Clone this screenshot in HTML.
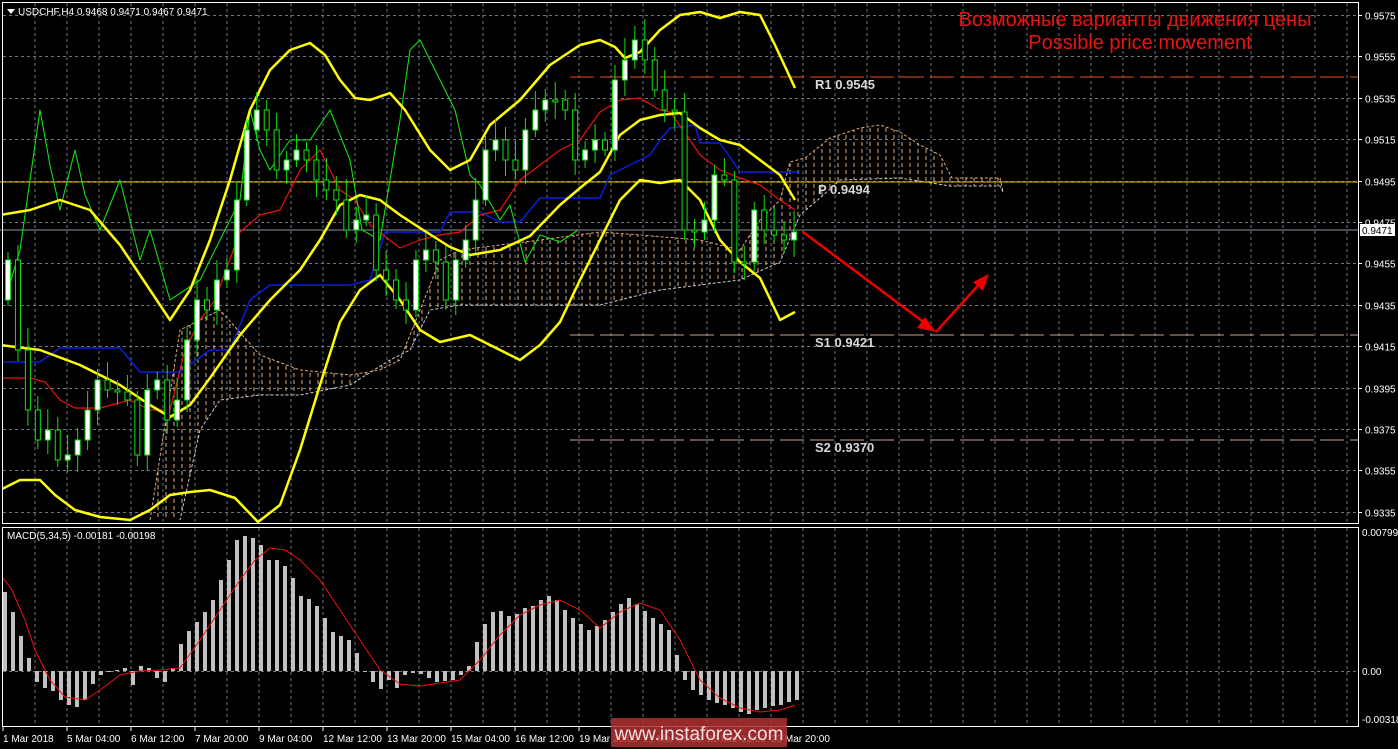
<!DOCTYPE html>
<html><head><meta charset="utf-8"><style>
html,body{margin:0;padding:0;background:#000;width:1398px;height:749px;overflow:hidden}
svg{display:block}
text{font-family:"Liberation Sans",sans-serif}
</style></head><body>
<svg id="s" width="1398" height="749" xmlns="http://www.w3.org/2000/svg">
<defs>
<clipPath id="main"><rect x="3" y="3" width="1355" height="520"/></clipPath>
<clipPath id="mc"><rect x="3" y="528" width="1355" height="198"/></clipPath>
</defs>
<rect width="1398" height="749" fill="#000"/>
<g id="grid"></g>
<g id="cloud" clip-path="url(#main)"></g>
<line x1="570" y1="77" x2="1358" y2="77" stroke="#e0501e" stroke-width="1" stroke-dasharray="24,6"/>
<line x1="0" y1="182" x2="1358" y2="182" stroke="#f0c000" stroke-width="1"/>
<line x1="570" y1="335" x2="1358" y2="335" stroke="#c8a090" stroke-width="1" stroke-dasharray="24,6"/>
<line x1="570" y1="440" x2="1358" y2="440" stroke="#c8a090" stroke-width="1" stroke-dasharray="24,6"/>
<line x1="0" y1="230" x2="1358" y2="230" stroke="#8a93a0" stroke-width="1"/>
<g font-family="Liberation Mono, monospace" font-size="13" font-weight="bold" fill="#d8d8d8">
<text x="815" y="89">R1 0.9545</text>
<text x="818" y="194">P 0.9494</text>
<text x="815" y="347">S1 0.9421</text>
<text x="815" y="452">S2 0.9370</text>
</g>
<g id="ind" clip-path="url(#main)" fill="none"></g>
<g id="cand" clip-path="url(#main)"></g>
<g stroke="#ee0000" stroke-width="2.5" fill="#ee0000">
<line x1="803" y1="232" x2="930" y2="327"/>
<polygon points="936,332 917,328 925,317" stroke="none"/>
<line x1="936" y1="332" x2="983" y2="280"/>
<polygon points="989,274 983,291 973,282" stroke="none"/>
</g>
<rect x="2.5" y="2.5" width="1356" height="521" fill="none" stroke="#fff" stroke-width="1"/>
<rect x="2.5" y="527.5" width="1356" height="199" fill="none" stroke="#fff" stroke-width="1"/>
<g id="macd" clip-path="url(#mc)"></g>
<g id="axis" font-size="10" fill="#fff"></g>
<polygon points="7,9 15,9 11,14" fill="#fff"/>
<text x="18" y="15" font-size="10" fill="#fff">USDCHF,H4  0.9468 0.9471 0.9467 0.9471</text>
<text x="7" y="539" font-size="10" fill="#fff">MACD(5,34,5) -0.00181 -0.00198</text>
<rect x="1360" y="224" width="35" height="12" fill="#fff"/>
<text x="1362" y="234" font-size="10" fill="#000">0.9471</text>
<g fill="#ee1111" font-size="20" text-anchor="middle">
<text x="1135" y="26">Возможные варианты движения цены</text>
<text x="1140" y="49">Possible price movement</text>
</g>
<rect x="611" y="718" width="176" height="29" fill="#b03030" opacity="0.85"/>
<text x="699" y="740" font-size="19" fill="#f0e0e0" text-anchor="middle">www.instaforex.com</text>
</svg>
<script>
(function(){
var NS="http://www.w3.org/2000/svg";
function el(p,t,a){var e=document.createElementNS(NS,t);for(var k in a)e.setAttribute(k,a[k]);document.getElementById(p).appendChild(e);return e;}
for(var x=35;x<1358;x+=32){el("grid","line",{x1:x,y1:3,x2:x,y2:523,stroke:"#6a7585","stroke-dasharray":"3,3"});el("grid","line",{x1:x,y1:528,x2:x,y2:726,stroke:"#6a7585","stroke-dasharray":"3,3"});}
var prices=["0.9575","0.9555","0.9535","0.9515","0.9495","0.9475","0.9455","0.9435","0.9415","0.9395","0.9375","0.9355","0.9335"];
for(var i=0;i<13;i++){var y=Math.round(15+i*41.4)+0.5;el("grid","line",{x1:3,y1:y,x2:1358,y2:y,stroke:"#6a7585","stroke-dasharray":"3,3"});
 el("axis","line",{x1:1358,y1:y,x2:1362,y2:y,stroke:"#fff"});
 var t=el("axis","text",{x:1365,y:y+4});t.textContent=prices[i];}
el("grid","line",{x1:3,y1:671.5,x2:1358,y2:671.5,stroke:"#6a7585","stroke-dasharray":"3,3"});
[["0.00799",536],["0.00",675],["-0.00318",723]].forEach(function(a){var t=el("axis","text",{x:1362,y:a[1]});t.textContent=a[0];});
var tl=["1 Mar 2018","5 Mar 04:00","6 Mar 12:00","7 Mar 20:00","9 Mar 04:00","12 Mar 12:00","13 Mar 20:00","15 Mar 04:00","16 Mar 12:00","19 Mar 20:00","21 Mar 04:00","22 Mar 12:00","23 Mar 20:00"];
for(var i=0;i<tl.length;i++){var x=3+i*64;el("axis","line",{x1:x,y1:727,x2:x,y2:731,stroke:"#fff"});var t=el("axis","text",{x:x,y:742});t.textContent=tl[i];}
var up=[[150,520],[180,330],[220,310],[260,355],[300,370],[350,375],[380,370],[400,360],[420,310],[440,260],[460,250],[500,245],[540,240],[600,232],[640,235],[700,240],[740,250],[760,220],[780,200],[790,162],[805,158],[830,138],[860,128],[880,125],[900,132],[920,145],[940,155],[952,178],[1000,178],[1003,192]];
var lo=[[1003,192],[1000,186],[950,186],[900,178],[840,180],[820,198],[800,215],[780,262],[740,280],[700,285],[660,290],[600,305],[520,305],[460,305],[430,310],[410,350],[390,360],[350,385],[300,395],[260,395],[220,400],[200,430],[180,520]];
var poly=up.concat(lo).map(function(p){return p.join(",")}).join(" ");
var cp=el("cloud","clipPath",{id:"cc"});var pp=document.createElementNS(NS,"polygon");pp.setAttribute("points",poly);cp.appendChild(pp);
var g=el("cloud","g",{"clip-path":"url(#cc)"});
for(var x=150;x<1005;x+=8){var l=document.createElementNS(NS,"line");l.setAttribute("x1",x);l.setAttribute("x2",x);l.setAttribute("y1",100);l.setAttribute("y2",523);l.setAttribute("stroke","#e0a878");l.setAttribute("stroke-dasharray","4,3");l.setAttribute("stroke-width","1");g.appendChild(l);}
el("cloud","polyline",{points:up.map(function(p){return p.join(",")}).join(" "),fill:"none",stroke:"#e0a878","stroke-dasharray":"3,2"});
el("cloud","polyline",{points:lo.map(function(p){return p.join(",")}).join(" "),fill:"none",stroke:"#d0c8d8","stroke-dasharray":"3,2"});
function pl(pts,c,w){el("ind","polyline",{points:pts,stroke:c,"stroke-width":w,"stroke-linejoin":"round"});}
pl("0,362 40,362 60,348 120,348 140,372 180,372 210,350 230,350 250,300 270,285 350,285 370,280 385,232 440,232 450,212 480,212 500,222 520,222 540,198 600,198 610,175 630,165 650,155 660,140 670,128 695,125 700,143 720,143 740,172 760,172 800,172","#0a1ee0",1.5);
pl("0,378 30,378 45,382 60,400 75,408 100,408 130,400 150,410 170,410 185,350 200,320 215,300 240,232 260,215 280,210 300,170 320,150 340,190 355,200 370,225 400,248 420,240 440,235 460,232 480,215 500,210 520,180 540,165 560,150 580,140 600,112 620,100 640,98 660,110 670,112 690,140 700,155 720,170 740,178 760,185 780,200 795,210","#ee1010",1.2);
pl("5,300 20,250 40,110 50,165 60,210 75,150 85,195 100,230 120,180 140,260 150,230 170,300 200,280 220,240 240,200 250,110 260,150 270,170 290,140 310,140 330,110 350,160 362,230 380,240 400,120 410,50 420,40 430,60 440,80 455,110 470,175 480,185 500,220 510,205 525,262 540,235 560,242 578,230","#10e010",1.1);
var bw=2.5,bc="#ffff00";
pl("0,215 30,210 60,200 90,210 120,245 150,290 170,320 190,290 210,240 230,180 250,110 270,70 290,50 310,43 325,55 340,80 355,98 370,100 390,93 405,110 430,150 450,170 470,160 490,125 520,100 550,65 580,45 600,40 615,47 625,58 640,52 660,30 680,15 700,12 720,18 740,12 760,15 775,45 795,88",bc,bw);
pl("0,345 40,350 80,365 120,385 150,405 170,417 190,405 210,378 240,335 270,300 300,270 320,240 340,205 360,195 380,200 400,215 420,228 450,247 470,255 500,250 530,236 560,205 580,188 600,172 620,135 640,120 660,115 680,113 700,128 720,140 740,145 760,160 780,175 795,200",bc,bw);
pl("0,490 20,480 40,480 55,495 75,510 100,517 130,520 150,510 170,495 190,492 210,490 235,498 258,522 280,505 300,450 320,385 340,322 360,290 380,275 400,300 420,330 440,342 470,335 500,350 520,360 540,345 560,322 580,280 600,240 620,200 640,180 660,183 680,180 700,200 720,240 740,262 760,278 780,320 795,312",bc,bw);
var cl=[260,350,410,440,430,460,455,440,410,380,390,392,400,455,390,380,420,400,340,300,310,280,270,200,130,110,130,170,160,150,160,180,190,200,230,220,215,270,280,300,310,260,250,262,300,260,240,200,150,140,160,170,130,110,100,100,110,160,150,140,150,80,60,40,60,90,110,112,230,232,220,175,180,262,262,210,230,235,240,232];
var prev=300;
for(var i=0;i<cl.length;i++){var x=5+i*9.95;var c=cl[i],o=prev;var tp=Math.min(o,c),bt=Math.max(o,c);if(bt-tp<2)bt=tp+2;
 el("cand","line",{x1:x+3,y1:tp-8-((i*7)%15),x2:x+3,y2:bt+6+((i*5)%12),stroke:"#10e010"});
 el("cand","rect",{x:x+0.5,y:tp,width:5,height:bt-tp,fill:c<o?"#fff":"#000",stroke:"#10e010","stroke-width":1});prev=c;}
var mh=[592,612,636,658,682,688,691,700,705,707,700,684,675,672,670,668,685,666,668,678,682,668,644,631,622,612,600,580,560,540,536,538,545,560,560,566,578,596,599,606,618,632,636,640,653,671,682,689,680,688,675,673,674,678,682,681,680,675,666,642,624,612,611,616,614,608,606,600,596,600,610,618,624,630,626,620,612,604,598,604,611,618,624,630,655,680,690,695,700,703,705,708,712,714,710,708,706,705,702,700];
for(var i=0;i<mh.length;i++){var x=3+i*8;var y=mh[i];el("macd","rect",{x:x,y:Math.min(y,671),width:4,height:Math.max(1,Math.abs(y-671)),fill:"#c0c0c0"});}
el("macd","polyline",{points:"3,578 12,590 25,620 35,650 50,680 65,697 85,700 100,690 120,675 140,671 160,670 180,668 200,640 220,610 240,580 255,560 270,548 285,550 300,560 320,580 340,610 360,640 380,670 400,684 420,686 440,683 460,680 480,660 500,635 520,615 540,605 560,600 580,610 600,628 620,612 640,603 660,610 680,640 700,680 720,698 740,708 760,712 780,710 795,705",fill:"none",stroke:"#ee1010","stroke-width":1});
})();
</script>
</body></html>
